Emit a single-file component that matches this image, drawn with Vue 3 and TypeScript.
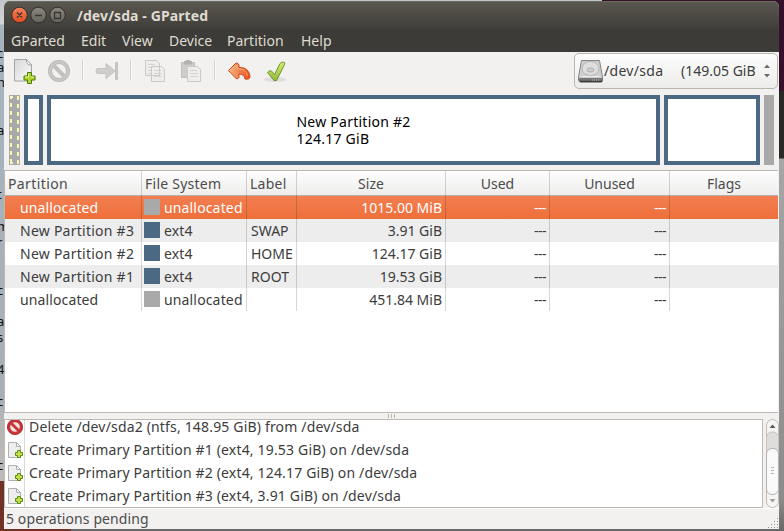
<script setup lang="ts">
import { computed, ref } from 'vue';

interface Partition {
  name: string;
  fs: string;
  label: string;
  size: string;
}

interface Operation {
  kind: 'delete' | 'create';
  text: string;
}

const menus = [
  { label: 'GParted', width: 55 },
  { label: 'Edit', width: 26 },
  { label: 'View', width: 32 },
  { label: 'Device', width: 43 },
  { label: 'Partition', width: 59 },
  { label: 'Help', width: 30 },
];

const partitions: Partition[] = [
  { name: 'unallocated', fs: 'unallocated', label: '', size: '1015.00 MiB' },
  { name: 'New Partition #3', fs: 'ext4', label: 'SWAP', size: '3.91 GiB' },
  { name: 'New Partition #2', fs: 'ext4', label: 'HOME', size: '124.17 GiB' },
  { name: 'New Partition #1', fs: 'ext4', label: 'ROOT', size: '19.53 GiB' },
  { name: 'unallocated', fs: 'unallocated', label: '', size: '451.84 MiB' },
];

const operations: Operation[] = [
  { kind: 'delete', text: 'Delete /dev/sda2 (ntfs, 148.95 GiB) from /dev/sda' },
  { kind: 'create', text: 'Create Primary Partition #1 (ext4, 19.53 GiB) on /dev/sda' },
  { kind: 'create', text: 'Create Primary Partition #2 (ext4, 124.17 GiB) on /dev/sda' },
  { kind: 'create', text: 'Create Primary Partition #3 (ext4, 3.91 GiB) on /dev/sda' },
];

// Clipped text of the window behind
const behind = [
  { y: 47, t: 'c' }, { y: 61, t: 'a' }, { y: 76, t: 'h' }, { y: 124, t: 'a' },
  { y: 188, t: 't' }, { y: 220, t: 'm' }, { y: 236, t: 'r' }, { y: 284, t: 'c' },
  { y: 315, t: 'a' }, { y: 331, t: 's' }, { y: 363, t: '4' }, { y: 395, t: 'c' }, { y: 459, t: 'c' },
];

const selected = ref(0);
const pending = computed(() => `${operations.length + 1} operations pending`);
</script>

<template>
  <div class="desktop">
    <div class="behind">
      <span v-for="b in behind" :key="b.y" :style="{ top: b.y + 'px' }">{{ b.t }}</span>
    </div>
    <div class="behind-right"></div>

    <div class="window">
      <header class="titlebar">
        <svg class="win-buttons" width="56" height="18" viewBox="0 0 56 18">
          <defs>
            <linearGradient id="close" x1="0" y1="0" x2="0" y2="1">
              <stop offset="0" stop-color="#f58460" />
              <stop offset="1" stop-color="#df4a1c" />
            </linearGradient>
            <linearGradient id="grey" x1="0" y1="0" x2="0" y2="1">
              <stop offset="0" stop-color="#8b887e" />
              <stop offset="1" stop-color="#65635b" />
            </linearGradient>
          </defs>
          <g stroke="#302e29">
            <circle cx="8.500" cy="9" r="7.800" fill="url(#close)" />
            <circle cx="27.500" cy="9" r="7.800" fill="url(#grey)" />
            <circle cx="46.500" cy="9" r="7.800" fill="url(#grey)" />
          </g>
          <path d="M6 6.500l5 5M11 6.500l-5 5M24 9.500h7M43.500 6.500h6v6h-6z" fill="none" stroke="#383630" stroke-width="1.300" />
        </svg>
        <span class="title">/dev/sda - GParted</span>
      </header>

      <nav class="menubar">
        <span v-for="m in menus" :key="m.label" :style="{ width: m.width + 'px' }">{{ m.label }}</span>
      </nav>

      <div class="toolbar">
        <svg class="tools" width="284" height="34" viewBox="0 0 284 34">
          <defs>
            <linearGradient id="paper" x1="0" y1="0" x2="1" y2="1">
              <stop offset="0" stop-color="#d8d8d8" />
              <stop offset="1" stop-color="#fafafa" />
            </linearGradient>
            <linearGradient id="undo" x1="0" y1="0" x2="1" y2="0">
              <stop offset="0" stop-color="#f5b680" />
              <stop offset="1" stop-color="#ea501c" />
            </linearGradient>
            <linearGradient id="check" x1="0" y1="0" x2="0" y2="1">
              <stop offset="0" stop-color="#dcec70" />
              <stop offset="1" stop-color="#8ebb38" />
            </linearGradient>
          </defs>
          <!-- new -->
          <path d="M10.500 7.500h12l5 5.500v16h-17z" fill="url(#paper)" stroke="#a5a5a5" />
          <path d="M22.500 7.500q-.5 6 5 5.500z" fill="#fff" stroke="#a5a5a5" />
          <path d="M23.500 20.500h4v3.500h3.500v4h-3.500v3.500h-4v-3.500h-3.500v-4h3.500z" fill="#b2d42c" stroke="#457d0a" />
          <path d="M24.500 21.500v3.500h-3.500M27 25h3" fill="none" stroke="#e2f286" />
          <!-- delete -->
          <circle cx="55" cy="19" r="9" fill="none" stroke="#b9b6b4" stroke-width="4" />
          <path d="M49 13l12 12" stroke="#c2bfbd" stroke-width="4" />
          <circle cx="55" cy="19" r="9" fill="none" stroke="#c9c6c4" stroke-width="2.500" />
          <path d="M78.500 8v20M126.500 8v20M210.500 8v20" stroke="#d3d1ce" />
          <path d="M79.500 8v20M127.500 8v20M211.500 8v20" stroke="#fbfaf9" />
          <!-- resize -->
          <path d="M93 16.500h9v-5l9 7.500-9 7.500v-5h-9q-2-2.500 0-5z" fill="#d0cdcb" stroke="#c4c1bf" />
          <path d="M111.500 10.500h2v17h-2z" fill="#c9c6c4" stroke="#c4c1bf" />
          <!-- copy -->
          <g fill="#efedec" stroke="#cbc9c7">
            <path d="M141.500 8.500h11l3 3v12h-14zM147.500 14.500h10l3 3v12h-13z" />
            <path d="M144 12.500h7M144 15.500h3M144 18.500h3M144 21.500h3M150 18.500h7M150 21.500h8M150 24.500h8" stroke="#d6d4d3" />
          </g>
          <!-- paste -->
          <path d="M177.500 10.500h13v15h-13z" fill="#cecccb" stroke="#c2c0be" />
          <path d="M180 9h8v3.500h-8zM182 8h4v2h-4z" fill="#b3b1af" />
          <path d="M183.500 14.500h10l3 3v12h-13z" fill="#efedec" stroke="#cbc9c7" />
          <path d="M186 18.500h7M186 21.500h8M186 24.500h8" stroke="#d6d4d3" />
          <!-- undo -->
          <path d="M224.500 18.500l7.500-7.500q2.500 0 3 2v2.500c7-.5 11 4 11 10q-1 2.500-5 1.500-1-5-6-5v3.500q-1 2-3 1z" fill="url(#undo)" stroke="#ce4918" stroke-linejoin="round" />
          <path d="M226.500 18.500l6.500-5.500v3.500q9 0 10.500 7" fill="none" stroke="#fbc49a" opacity=".7" />
          <!-- apply -->
          <ellipse cx="271" cy="27.500" rx="11" ry="2.500" fill="#dfdddb" />
          <path d="M263.500 20.500q2-2.500 4-1.500l3 3.500 5.500-11q2-2.500 4.500-1l.3 1.500-8.300 16.500h-2.500z" fill="url(#check)" stroke="#6b9730" stroke-linejoin="round" />
        </svg>
        <div class="device-combo">
          <svg width="26" height="26" viewBox="0 0 26 26">
            <path d="M3.500 2.500h18l3 16.500v3q0 2-2 2h-20q-2 0-2-2v-3z" fill="#cfcfcf" stroke="#858585" />
            <path d="M1 20h24v2.500q0 1.500-2 1.500h-20q-2 0-2-1.500z" fill="#777" />
            <path d="M2 23.500h22" stroke="#3c3c3c" stroke-width="1.500" />
            <ellipse cx="12.500" cy="10.500" rx="8.500" ry="7" fill="#dedede" stroke="#b5b5b5" />
            <ellipse cx="12.500" cy="12" rx="3.500" ry="2" fill="#d0d0d0" stroke="#adadad" />
            <path d="M3.500 18.500h18" stroke="#ececec" />
            <path d="M14 22h8" stroke="#bbb" stroke-dasharray="1 1" />
          </svg>
          <span class="dev-name">/dev/sda</span>
          <span class="dev-size">(149.05 GiB)</span>
          <svg class="updown" width="8" height="14" viewBox="0 0 8 14">
            <path d="M1 4l3-3.500 3 3.500zM1 10l3 3.500 3-3.500z" fill="#6d6b68" />
          </svg>
        </div>
      </div>

      <div class="disk">
        <div class="block unalloc picked">
          <svg width="11" height="70" viewBox="0 0 11 70">
            <path d="M2 68V2h7v66z" fill="none" stroke="#f8f8b4" stroke-width="2" stroke-dasharray="4 4" />
          </svg>
        </div>
        <div class="block swap"></div>
        <div class="block home">
          <div class="block-text">
            <span>New Partition #2</span>
            <span>124.17 GiB</span>
          </div>
        </div>
        <div class="block root"></div>
        <div class="block unalloc tail"></div>
      </div>

      <div class="table">
        <div class="row head">
          <div class="c-left wider">Partition</div>
          <div class="c-left wide">File System</div>
          <div class="c-left wide">Label</div>
          <div>Size</div>
          <div>Used</div>
          <div>Unused</div>
          <div>Flags</div>
        </div>
        <div
          v-for="(p, i) in partitions"
          :key="i"
          class="row"
          :class="{ odd: i % 2 === 1, selected: i === selected }"
          @click="selected = i"
        >
          <div class="name" :class="{ wide: p.fs === 'ext4' }">{{ p.name }}</div>
          <div class="fs"><i :class="p.fs"></i><span>{{ p.fs }}</span></div>
          <div class="label">{{ p.label }}</div>
          <div class="num">{{ p.size }}</div>
          <div class="num dash">---</div>
          <div class="num dash">---</div>
          <div></div>
        </div>
      </div>

      <div class="splitter"><i></i><i></i><i></i></div>

      <div class="pane">
        <div class="ops">
          <div v-for="op in operations" :key="op.text" class="op">
            <svg v-if="op.kind === 'delete'" width="18" height="18" viewBox="0 0 18 18">
              <circle cx="9" cy="9" r="6.300" fill="#f3e3e3" stroke="#c9343a" stroke-width="3" />
              <path d="M4.500 4.500l9 9" stroke="#c9343a" stroke-width="2.800" />
              <circle cx="9" cy="9" r="7.600" fill="none" stroke="#a8242b" stroke-width=".8" />
            </svg>
            <svg v-else width="18" height="18" viewBox="0 0 18 18">
              <path d="M2.500 1.500h8l4 4v11h-12z" fill="#eee" stroke="#b0b0b0" />
              <path d="M10.500 1.500v4h4z" fill="#fff" stroke="#b0b0b0" />
              <path d="M11.500 9.500h3v2h2v3h-2v2h-3v-2h-2v-3h2z" fill="#c5df49" stroke="#5b8c15" />
            </svg>
            <span>{{ op.text }}</span>
          </div>
        </div>
        <svg class="scroll" width="13" height="89" viewBox="0 0 13 89">
          <rect x=".5" y=".5" width="12" height="88" rx="6" fill="#f6f5f4" stroke="#bfbbb7" />
          <path d="M.5 18q1-5 6-5t6 5v18h-12z" fill="#dfdddb" stroke="#c6c3bf" />
          <rect x=".5" y="29.500" width="12" height="46" rx="5.500" fill="#faf9f9" stroke="#b6b2ae" />
          <path d="M5 48.500h3M5 51.500h3M5 54.500h3" stroke="#b8b5b2" />
          <path d="M3.500 9l3-3.500 3 3.500z" fill="#5a5856" />
          <path d="M3.500 80l3 3.500 3-3.500z" fill="#a09d9a" />
        </svg>
      </div>

      <footer class="status">
        <span>{{ pending }}</span>
        <svg width="12" height="12" viewBox="0 0 12 12">
          <path
            d="M10 1.500h1M7 4.500h1M10 4.500h1M4 7.500h1M7 7.500h1M10 7.500h1M1 10.500h1M4 10.500h1M7 10.500h1M10 10.500h1"
            stroke="#97948f"
          />
        </svg>
      </footer>
    </div>
  </div>
</template>

<style>
body {
  margin: 0;
  overflow: hidden;
}
</style>

<style scoped>
.desktop {
  position: relative;
  box-sizing: border-box;
  width: 784px;
  height: 531px;
  padding: 1px 5px 2px 4px;
  overflow: hidden;
  background: linear-gradient(90deg, #6f3225 71px, #686868 71px);
  font-family: 'Noto Sans', 'Open Sans', sans-serif;
  font-size: 14px;
  color: #3c3c3c;
}

.behind {
  position: absolute;
  left: 0;
  top: 0;
  width: 602px;
  height: 481px;
  background: linear-gradient(#c3c6c9 0, #d2d4d6 24px, #a8b3bd 25px, #a8b0b7 400px, #b5b5b5 420px, #bdbbb9 480px);
  font-size: 13px;
  color: #111;
}

.behind span {
  position: absolute;
  left: -3px;
  line-height: 13px;
}

.behind-right {
  position: absolute;
  left: 602px;
  top: 0;
  right: 0;
  height: 531px;
  background: linear-gradient(#35102b 91px, #292826 91px, #292826 158px, #a6a6a6 159px, #8b8b8b 500px, #686868);
}

.window {
  position: relative;
  height: 528px;
  overflow: hidden;
  background: #f2f1f0;
  border-radius: 6px 6px 0 0;
  white-space: nowrap;
}

.titlebar {
  display: flex;
  align-items: center;
  height: 28px;
  background: linear-gradient(#5b5850, #403e39);
  box-shadow: inset 0 1px #6b6960;
}

.win-buttons {
  margin-left: 7px;
}

.title {
  margin-left: 10px;
  font-weight: bold;
  letter-spacing: 0.1px;
  color: #dfdbd2;
}

.menubar {
  display: flex;
  gap: 15px;
  height: 23px;
  padding-left: 7px;
  background: #3c3b37;
  color: #dfdbd2;
  line-height: 23px;
}

.toolbar {
  display: flex;
  justify-content: space-between;
  height: 38px;
}

.device-combo {
  display: flex;
  align-items: center;
  box-sizing: border-box;
  width: 204px;
  height: 36px;
  margin: 1px 1px 0 0;
  padding: 0 0 1px 3px;
  border: 1px solid #b9b5b1;
  border-radius: 5px;
  background: linear-gradient(#fdfdfd, #ececea);
}

.dev-name {
  width: 60px;
  letter-spacing: 0.3px;
}

.dev-size {
  width: 75px;
  margin-left: 17px;
  overflow: hidden;
}

.updown {
  margin-left: 7px;
}

.disk {
  display: flex;
  gap: 4px;
  height: 70px;
  padding: 5px 0 5px 5px;
}

.block {
  box-sizing: border-box;
  border: 4px solid #4b6983;
  background: #fff;
}

.block.unalloc {
  width: 11px;
  border: 0;
  background: #a9a9a9;
}

.block.tail {
  width: 10px;
}

.picked svg {
  display: block;
}

.swap {
  width: 19px;
}

.home {
  display: flex;
  align-items: center;
  justify-content: center;
  width: 613px;
}

.root {
  width: 96px;
}

.block-text {
  display: flex;
  flex-direction: column;
  line-height: 17px;
  letter-spacing: 0.25px;
  color: #000;
}

.table {
  height: 241px;
  margin-right: 1px;
  border: 1px solid #bdb7b1;
  border-width: 1px 0 1px 1px;
  background: #fff;
}

.row {
  display: grid;
  grid-template-columns: 137px 105px 50px 149px 104px 120px 1fr;
  height: 23px;
  line-height: 23px;
}

.row > div {
  box-sizing: border-box;
  border-right: 1px solid rgba(0, 0, 0, 0.16);
}

.row > div:last-child {
  border-right: 0;
}

.row.odd {
  background: #ededed;
}

.row.selected {
  background: linear-gradient(#f37e50, #ed6f3b);
  color: #fff;
}

.row.head {
  height: 25px;
  box-sizing: border-box;
  border-bottom: 1px solid #b5b0aa;
  background: linear-gradient(#fefefe, #eeedec);
  color: #4c4c4c;
  text-align: center;
  line-height: 25px;
}

.row .c-left {
  padding-left: 3px;
  text-align: left;
}

.row .wide {
  letter-spacing: 0.25px;
}

.row .wider {
  letter-spacing: 0.4px;
}

.name {
  padding-left: 15px;
  letter-spacing: 0.12px;
}

.fs {
  display: flex;
  align-items: center;
  gap: 4px;
  padding-left: 2px;
  letter-spacing: 0.15px;
}

.fs i {
  width: 16px;
  height: 16px;
  margin-top: -1px;
  background: #4b6983;
}

.fs i.unallocated {
  background: #a9a9a9;
}

.label {
  padding-left: 4px;
}

.num {
  padding-right: 3px;
  text-align: right;
}

.dash {
  letter-spacing: -0.5px;
}

.splitter {
  display: flex;
  align-items: center;
  justify-content: center;
  gap: 2px;
  height: 6px;
}

.splitter i {
  width: 1px;
  height: 4px;
  background: #b9b5b0;
}

.pane {
  display: flex;
  justify-content: space-between;
  height: 89px;
}

.ops {
  display: flex;
  flex-direction: column;
  justify-content: flex-end;
  box-sizing: border-box;
  width: 759px;
  height: 89px;
  overflow: hidden;
  border: 1px solid #bdb9b4;
  background: linear-gradient(90deg, #fff 19px, #d8d8d8 19px, #d8d8d8 20px, #fff 20px);
}

.op {
  display: flex;
  flex-shrink: 0;
  align-items: center;
  gap: 5px;
  height: 23px;
  padding-left: 1px;
  letter-spacing: 0.17px;
}

.status {
  display: flex;
  align-items: flex-end;
  justify-content: space-between;
  height: 20px;
  border-top: 1px solid #fff;
  line-height: 21px;
}

.status span {
  margin-left: 2px;
  letter-spacing: 0.1px;
  color: #4c4c4c;
}
</style>
